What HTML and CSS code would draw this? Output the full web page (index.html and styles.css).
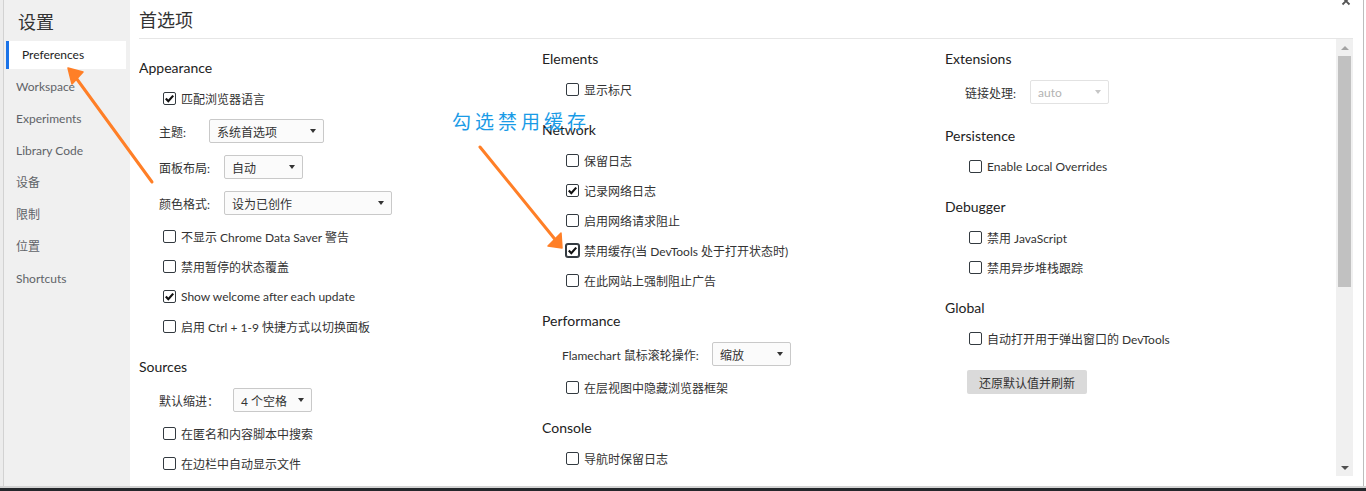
FILE: index.html
```html
<!DOCTYPE html>
<html lang="zh-CN">
<head>
<meta charset="utf-8">
<title>设置 - 首选项</title>
<link rel="stylesheet" href="styles.css">
</head>
<body>
<div class="page">
  <div class="dialog">
    <aside class="sidebar">
      <div class="side-title">设置</div>
      <ul class="side-menu">
        <li class="side-item selected">Preferences</li>
        <li class="side-item">Workspace</li>
        <li class="side-item">Experiments</li>
        <li class="side-item">Library Code</li>
        <li class="side-item">设备</li>
        <li class="side-item">限制</li>
        <li class="side-item">位置</li>
        <li class="side-item">Shortcuts</li>
      </ul>
    </aside>
    <main class="main">
      <header class="main-header">首选项</header>
      <div class="main-body">
        <div class="content">
          <div class="column col-first">
            <section class="section">
              <h3 class="sec-title">Appearance</h3>
              <div class="cb-row"><span class="cb checked"><svg viewBox="0 0 13 13"><path d="M2.8 6.6 L5.3 9.2 L10.2 3.6"/></svg></span>匹配浏览器语言</div>
              <div class="sel-row"><span class="sel-label lw-50">主题:</span><span class="select sw-115"><span>系统首选项</span><i class="caret"></i></span></div>
              <div class="sel-row"><span class="sel-label">面板布局:</span><span class="select"><span>自动</span><i class="caret"></i></span></div>
              <div class="sel-row"><span class="sel-label">颜色格式:</span><span class="select sw-168"><span>设为已创作</span><i class="caret"></i></span></div>
              <div class="cb-row"><span class="cb"></span>不显示 Chrome Data Saver 警告</div>
              <div class="cb-row"><span class="cb"></span>禁用暂停的状态覆盖</div>
              <div class="cb-row"><span class="cb checked"><svg viewBox="0 0 13 13"><path d="M2.8 6.6 L5.3 9.2 L10.2 3.6"/></svg></span>Show welcome after each update</div>
              <div class="cb-row"><span class="cb"></span>启用 Ctrl + 1-9 快捷方式以切换面板</div>
            </section>
            <section class="section">
              <h3 class="sec-title">Sources</h3>
              <div class="sel-row"><span class="sel-label lw-74">默认缩进：</span><span class="select"><span>4 个空格</span><i class="caret"></i></span></div>
              <div class="cb-row"><span class="cb"></span>在匿名和内容脚本中搜索</div>
              <div class="cb-row"><span class="cb"></span>在边栏中自动显示文件</div>
            </section>
          </div>
          <div class="column">
            <section class="section">
              <h3 class="sec-title">Elements</h3>
              <div class="cb-row"><span class="cb"></span>显示标尺</div>
            </section>
            <section class="section">
              <h3 class="sec-title">Network</h3>
              <div class="cb-row"><span class="cb"></span>保留日志</div>
              <div class="cb-row"><span class="cb checked"><svg viewBox="0 0 13 13"><path d="M2.8 6.6 L5.3 9.2 L10.2 3.6"/></svg></span>记录网络日志</div>
              <div class="cb-row"><span class="cb"></span>启用网络请求阻止</div>
              <div class="cb-row"><span class="cb checked focused"><svg viewBox="0 0 13 13"><path d="M2.8 6.6 L5.3 9.2 L10.2 3.6"/></svg></span>禁用缓存(当 DevTools 处于打开状态时)</div>
              <div class="cb-row"><span class="cb"></span>在此网站上强制阻止广告</div>
            </section>
            <section class="section">
              <h3 class="sec-title">Performance</h3>
              <div class="sel-row"><span class="sel-label lw-150">Flamechart 鼠标滚轮操作:</span><span class="select"><span>缩放</span><i class="caret"></i></span></div>
              <div class="cb-row"><span class="cb"></span>在层视图中隐藏浏览器框架</div>
            </section>
            <section class="section">
              <h3 class="sec-title">Console</h3>
              <div class="cb-row"><span class="cb"></span>导航时保留日志</div>
            </section>
          </div>
          <div class="column">
            <section class="section">
              <h3 class="sec-title">Extensions</h3>
              <div class="sel-row"><span class="sel-label">链接处理:</span><span class="select disabled"><span>auto</span><i class="caret"></i></span></div>
            </section>
            <section class="section">
              <h3 class="sec-title">Persistence</h3>
              <div class="cb-row"><span class="cb"></span>Enable Local Overrides</div>
            </section>
            <section class="section">
              <h3 class="sec-title">Debugger</h3>
              <div class="cb-row"><span class="cb"></span>禁用 JavaScript</div>
              <div class="cb-row"><span class="cb"></span>禁用异步堆栈跟踪</div>
            </section>
            <section class="section">
              <h3 class="sec-title">Global</h3>
              <div class="cb-row"><span class="cb"></span>自动打开用于弹出窗口的 DevTools</div>
              <div class="btn-row"><span class="btn">还原默认值并刷新</span></div>
            </section>
          </div>
        </div>
        <div class="scrollbar">
          <div class="sb-btn"><i class="sb-up"></i></div>
          <div class="sb-track"><div class="sb-thumb"></div></div>
          <div class="sb-btn"><i class="sb-down"></i></div>
        </div>
      </div>
    </main>
  </div>
  <div class="taskbar"></div>

  <svg class="close-x" viewBox="0 0 10 10"><path d="M1.5 1.5 L8.5 8.5 M8.5 1.5 L1.5 8.5"/></svg>
  <div class="annotation">勾选禁用缓存</div>
  <svg class="arrows" viewBox="0 0 1366 491">
    <g class="arrow">
      <path d="M152 182 L71 71"/>
      <path class="head" d="M68 68 L83 72 L72 84 Z"/>
      <path d="M480 147 L558 243"/>
      <path class="head" d="M562 248 L548 246 L561 233 Z"/>
    </g>
  </svg>
</div>
</body>
</html>
```

FILE: styles.css
```css
* { box-sizing: border-box; }

html, body {
  margin: 0;
  padding: 0;
  background: #ffffff;
}

body {
  font-family: Lato, "Noto Sans CJK SC", sans-serif;
  font-size: 12px;
  color: #333333;
}

.page {
  position: relative;
  width: 1366px;
  height: 491px;
  overflow: hidden;
  display: flex;
  flex-direction: column;
}

.dialog {
  height: 486px;
  width: 1364px;
  display: flex;
  border-left: 3px solid #ececec;
  border-right: 1px solid #bdbdbd;
  background: #ffffff;
}

/* Sidebar */
.sidebar {
  width: 127px;
  flex: none;
  background: #f0f0f0;
  border-left: 1px solid #d2d2d2;
  display: flex;
  flex-direction: column;
}

.side-title {
  height: 39px;
  padding-left: 14px;
  font-family: "Noto Sans CJK SC", sans-serif;
  font-size: 18px;
  line-height: 42px;
  color: #333333;
}

.side-menu {
  list-style: none;
  margin: 0;
  padding: 2px 0 0 0;
  display: flex;
  flex-direction: column;
  gap: 4px;
}

.side-item {
  height: 28px;
  margin: 0 4px 0 2px;
  padding-left: 10px;
  line-height: 28px;
  font-size: 12px;
  color: #5f6368;
  white-space: nowrap;
}

.side-item.selected {
  background: #ffffff;
  border-left: 3px solid #1a73e8;
  padding-left: 13px;
  color: #222222;
}

/* Main */
.main {
  flex: 1;
  display: flex;
  flex-direction: column;
  padding: 0 10px 10px 9px;
  min-width: 0;
}

.main-header {
  height: 39px;
  flex: none;
  border-bottom: 1px solid #e6e6e6;
  font-family: "Noto Sans CJK SC", sans-serif;
  font-size: 18px;
  line-height: 38px;
  color: #333333;
}

.main-body {
  flex: 1;
  display: flex;
  min-height: 0;
}

.content {
  flex: 1;
  display: flex;
  overflow: hidden;
  min-width: 0;
}

.column {
  width: 403px;
  flex: none;
  padding-top: 5px;
}

.column.col-first {
  padding-top: 14px;
}

.section {
  margin-bottom: 11px;
}

.sec-title {
  margin: 0;
  height: 30px;
  line-height: 30px;
  font-size: 14px;
  font-weight: normal;
  color: #222222;
}

.cb-row {
  height: 30px;
  display: flex;
  align-items: center;
  padding-left: 24px;
  white-space: nowrap;
  color: #333333;
}

.cb {
  width: 13px;
  height: 13px;
  flex: none;
  margin-right: 5px;
  border: 1px solid #333a40;
  border-radius: 2px;
  background: #ffffff;
  display: flex;
  align-items: center;
  justify-content: center;
}

.cb svg {
  width: 13px;
  height: 13px;
  flex: none;
}

.cb svg path {
  fill: none;
  stroke: #111111;
  stroke-width: 2.2;
}

.cb.focused {
  box-shadow: 0 0 0 1px #333a40;
}

.sel-row {
  height: 36px;
  display: flex;
  align-items: center;
  padding-left: 20px;
  white-space: nowrap;
}

.sel-label {
  width: 65px;
  flex: none;
  color: #333333;
}

.sel-label.lw-50 { width: 50px; }
.sel-label.lw-74 { width: 74px; }
.sel-label.lw-150 { width: 150px; }

.select {
  width: 79px;
  height: 24px;
  flex: none;
  display: flex;
  align-items: center;
  justify-content: space-between;
  padding: 0 7px 0 7px;
  border: 1px solid #c9c9c9;
  border-radius: 2px;
  background: #fbfbfb;
  color: #333333;
}

.select.sw-115 { width: 115px; }
.select.sw-168 { width: 168px; }

.caret {
  width: 0;
  height: 0;
  border-left: 3.5px solid transparent;
  border-right: 3.5px solid transparent;
  border-top: 4px solid #333333;
}

.select.disabled {
  border-color: #e2e2e2;
  background: #ffffff;
  color: #b3b3b3;
}

.select.disabled .caret {
  border-top-color: #c6c6c6;
}

.btn-row {
  margin-top: 11px;
  height: 36px;
  display: flex;
  align-items: center;
  padding-left: 22px;
}

.btn {
  width: 120px;
  height: 24px;
  display: flex;
  align-items: center;
  justify-content: center;
  background: #dadada;
  border-radius: 2px;
  color: #333333;
}

/* Scrollbar */
.scrollbar {
  width: 17px;
  flex: none;
  background: #f0f0f0;
  display: flex;
  flex-direction: column;
}

.sb-btn {
  height: 17px;
  flex: none;
  display: flex;
  align-items: center;
  justify-content: center;
}

.sb-up {
  width: 0;
  height: 0;
  border-left: 4px solid transparent;
  border-right: 4px solid transparent;
  border-bottom: 4px solid #a3a3a3;
}

.sb-down {
  width: 0;
  height: 0;
  border-left: 4px solid transparent;
  border-right: 4px solid transparent;
  border-top: 4px solid #505050;
}

.sb-track {
  flex: 1;
  padding: 0 2px;
}

.sb-thumb {
  height: 231px;
  background: #c1c1c1;
}

.taskbar {
  height: 5px;
  flex: none;
  border-top: 2px solid #d3d3d3;
  background: #24272b;
}

/* Overlays */
.close-x {
  position: absolute;
  left: 1341px;
  top: -4px;
  width: 10px;
  height: 10px;
}

.close-x path {
  stroke: #555555;
  stroke-width: 1.8;
  fill: none;
}

.annotation {
  position: absolute;
  left: 452px;
  top: 108px;
  font-family: "Noto Sans CJK SC", sans-serif;
  font-size: 19px;
  font-weight: 400;
  line-height: 26px;
  letter-spacing: 4px;
  color: #1a9be6;
  white-space: nowrap;
}

.arrows {
  position: absolute;
  left: 0;
  top: 0;
  width: 1366px;
  height: 491px;
  pointer-events: none;
}

.arrow path {
  stroke: #ff7f27;
  stroke-width: 3;
  stroke-linecap: round;
  fill: none;
}

.arrow path.head {
  fill: #ff7f27;
  stroke-width: 1.5;
  stroke-linejoin: round;
}
```
